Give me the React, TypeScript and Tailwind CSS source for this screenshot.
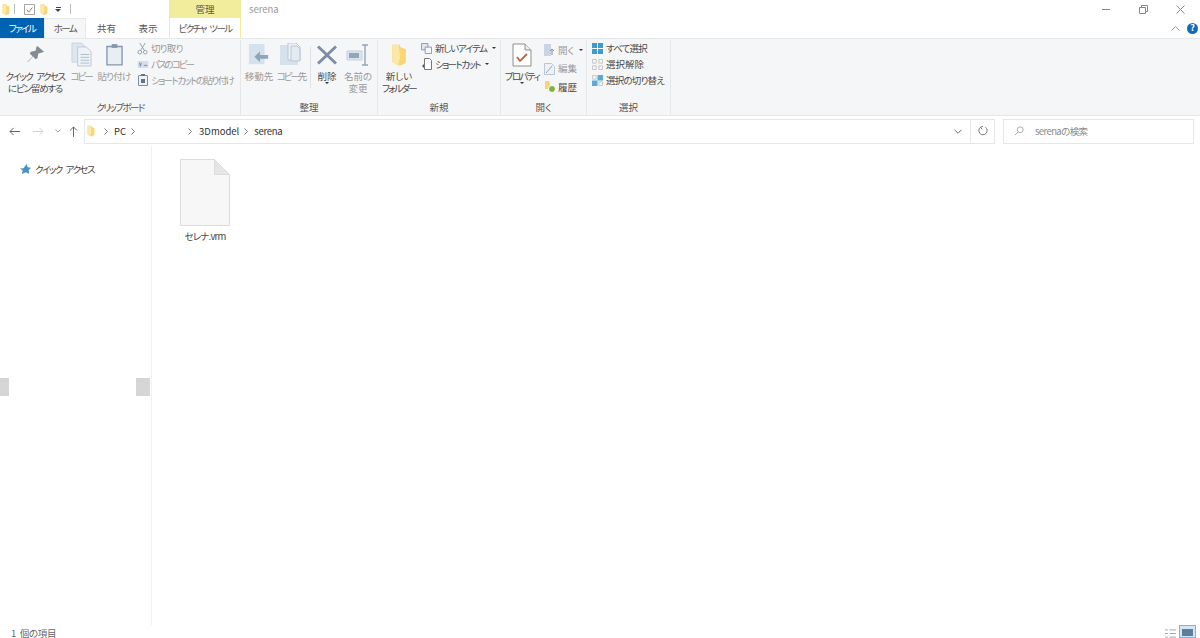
import type { ReactNode } from "react";

const font = "font-['Noto_Sans_CJK_JP','Noto_Sans',sans-serif] [font-feature-settings:'palt']";
// the original UI font has much narrower kana than Noto
const xl = "tracking-[-2px]";
const lg = "tracking-[-1.6px]";
const md = "tracking-[-1.2px]";
const sm = "tracking-[-0.8px]";

function Folder({ className }: { className: string }) {
	return (
		<svg viewBox="0 0 14 20" className={className}>
			<path d="M1 1h7v2l5 2v12l-4 2H6l-5-3z" fill="#f8d675" />
			<path d="M1 1h6v3l1 8-2 7-5-3z" fill="#fbe7a6" />
		</svg>
	);
}

function Chevron({ className }: { className: string }) {
	return (
		<svg viewBox="0 0 4 7" className={`h-[7px] w-[4px] shrink-0 ${className}`}>
			<path d="M.5.500l3 3-3 3" fill="none" stroke="#777" />
		</svg>
	);
}

function BigButton({ w, icon, lines, dim }: { w: number; icon: ReactNode; lines: ReactNode[]; dim?: boolean }) {
	return (
		<div
			className={`flex shrink-0 flex-col items-center ${dim ? "text-[#9a9a9a]" : "text-[#4a4a4a]"}`}
			style={{ width: w }}
		>
			<div className="flex h-[29px] items-center justify-center">{icon}</div>
			<div className="mt-[1px] text-center text-[9.5px] leading-[12px] whitespace-nowrap">
				{lines.map((l, i) => (
					<div key={i}>{l}</div>
				))}
			</div>
		</div>
	);
}

function Small({ icon, label, dim, caret, track }: { icon: ReactNode; label: string; dim?: boolean; caret?: boolean; track?: string }) {
	return (
		<div className={`flex h-[16px] items-center gap-[2px] text-[9.5px] whitespace-nowrap ${dim ? "text-[#9a9a9a]" : "text-[#4a4a4a]"}`}>
			<span className="flex w-[13px] justify-center">{icon}</span>
			<span className={track}>{label}</span>
			{caret && <span className="ml-[3px] h-0 w-0 border-x-[2px] border-t-[2px] border-x-transparent border-t-[#333]" />}
		</div>
	);
}

function Group({ w, label, track, children }: { w: number; label: string; track?: string; children: ReactNode }) {
	return (
		<div className="flex shrink-0 flex-col border-r border-[#e6e7e8]" style={{ width: w }}>
			<div className="flex h-[61px]">{children}</div>
			<div className={`text-center text-[9.5px] leading-[12px] text-[#555] ${track ?? ""}`}>{label}</div>
		</div>
	);
}

const Pin = (
	<svg viewBox="0 0 20 20" className="h-[19px] w-[19px]">
		<path d="M12 1l7 6-2 1-4 1-1 5-2 1-2.500-3L2 18l-.5-.5L7 12 4 9l1-2 5-1 1-4z" fill="#858b94" />
	</svg>
);
const CopyIcon = (
	<svg viewBox="0 0 22 26" className="h-[25px] w-[21px]">
		<path d="M1 1h10l3 3v17H1z" fill="#dfe6ef" stroke="#c9d3e0" />
		<path d="M7 5h9l5 5v15H7z" fill="#eef2f7" stroke="#b9c6d6" />
		<path d="M10 13h9M10 16h9M10 19h9M10 22h9" stroke="#aebccd" />
	</svg>
);
const PasteIcon = (
	<svg viewBox="0 0 18 24" className="h-[23px] w-[17px]">
		<path d="M1 3.500h16v19.500H1z" fill="#e9eef4" stroke="#8496ab" strokeWidth="1.400" />
		<path d="M6 1h6v4H6z" fill="#8496ab" />
	</svg>
);
const MoveIcon = (
	<svg viewBox="0 0 24 24" className="h-[24px] w-[22px]">
		<path d="M1 0h17v22H1z" fill="#d6e1ee" />
		<path d="M22 12h-9V8l-6 6 6 6v-4h9z" fill="#8fa5bd" />
	</svg>
);
const CopyToIcon = (
	<svg viewBox="0 0 24 24" className="h-[24px] w-[24px]">
		<path d="M1 2h18v20H1z" fill="#d6e1ee" />
		<path d="M9 0h8l4 4v13H9z" fill="#eef2f7" stroke="#b9c6d6" />
		<path d="M12 3h6l3 3v12h-9z" fill="#e4eaf1" stroke="#b9c6d6" />
	</svg>
);
const DeleteIcon = (
	<svg viewBox="0 0 20 20" className="h-[20px] w-[20px]">
		<path d="M2 .5l8 7.500 8-7.500L20 2.500 12 10l8 7.500-2 2-8-7.500-8 7.500-2-2L8 10 0 2.500z" fill="#7b8ea6" />
	</svg>
);
const RenameIcon = (
	<svg viewBox="0 0 24 22" className="h-[22px] w-[24px]">
		<path d="M1 7h15v9H1z" fill="#dbe4ee" stroke="#c6d1de" />
		<path d="M3 9h10v5H3z" fill="#93a5ba" />
		<path d="M16 1h6M16 21h6M19 1v20" stroke="#93a5ba" strokeWidth="1.400" fill="none" />
	</svg>
);
const PropsIcon = (
	<svg viewBox="0 0 20 24" className="h-[24px] w-[20px]">
		<path d="M1 1h12l6 6v16H1z" fill="#fff" stroke="#8f8f8f" />
		<path d="M13 1v6h6" fill="#eee" stroke="#8f8f8f" />
		<path d="M5 14l3 4 7-7" fill="none" stroke="#c0623a" strokeWidth="1.800" />
	</svg>
);

export default function App() {
	return (
		<div className={`flex h-[638px] w-[1200px] flex-col overflow-hidden bg-white ${font}`}>
			{/* title bar */}
			<div className="flex h-[18px] shrink-0">
				<div className="flex w-[169px] items-center pl-[2px]">
					<Folder className="h-[13px] w-[8px]" />
					<span className="mx-[4px] h-[10px] w-px bg-[#bbb]" />
					<svg viewBox="0 0 12 12" className="mx-[5px] h-[11px] w-[11px]">
						<path d="M.5.500h11v11H.500z" fill="#fff" stroke="#999" />
						<path d="M3 6l2 3 4-5" fill="none" stroke="#c0623a" />
					</svg>
					<Folder className="h-[13px] w-[8px]" />
					<span className="mx-[7px] flex flex-col items-center gap-[1px]">
						<span className="h-px w-[5px] bg-[#444]" />
						<span className="h-0 w-0 border-x-[3px] border-t-[3px] border-x-transparent border-t-[#444]" />
					</span>
					<span className="ml-[2px] h-[10px] w-px bg-[#bbb]" />
				</div>
				<div className="flex w-[72px] items-center justify-center bg-[#f1ed9c] text-[9.5px] text-[#555]">管理</div>
				<div className="flex flex-1 items-center pl-[8px] text-[9.5px] text-[#999]">serena</div>
				<div className="flex items-center text-[#777]">
					<span className="mr-[29px] h-px w-[8px] bg-[#888]" />
					<svg viewBox="0 0 9 9" className="mr-[28px] h-[9px] w-[9px]">
						<path d="M.5 2.500h6v6h-6zM2.500 2.500v-2h6v6h-2" fill="none" stroke="#888" />
					</svg>
					<svg viewBox="0 0 9 9" className="mr-[15px] h-[9px] w-[9px]">
						<path d="M.5.500l8 8M8.500.500l-8 8" stroke="#888" fill="none" />
					</svg>
				</div>
			</div>

			{/* tabs */}
			<div className="flex h-[20px] shrink-0 items-stretch text-[9.5px] text-[#555]">
				<div className={`flex w-[44px] items-center justify-center bg-[#0063b1] text-white ${lg}`}>ファイル</div>
				<div className={`flex w-[42px] items-center justify-center border-x border-t border-[#e6e7e8] bg-[#f5f6f7] ${lg}`}>ホーム</div>
				<div className="flex w-[41px] items-center justify-center">共有</div>
				<div className="flex w-[42px] items-center justify-center">表示</div>
				<div className={`flex w-[72px] items-center justify-center border-x border-[#f1ed9c] [word-spacing:3px] ${lg}`}>ピクチャ ツール</div>
				<div className="flex flex-1 items-center justify-end">
					<svg viewBox="0 0 9 5" className="mr-[7px] h-[5px] w-[9px]">
						<path d="M.5 4.500l4-4 4 4" fill="none" stroke="#999" />
					</svg>
					<span className="mr-[2px] flex h-[11px] w-[11px] items-center justify-center rounded-full bg-[#0f6cbd] text-[9px] font-bold text-white">?</span>
				</div>
			</div>

			{/* ribbon */}
			<div className="flex h-[78px] shrink-0 border-y border-[#e6e7e8] bg-[#f5f6f7] pt-[1px]">
				<Group w={241} label="クリップボード" track={lg}>
					<BigButton
						w={70}
						icon={Pin}
						lines={[
							<span className={`[word-spacing:3px] tracking-[-1.5px]`}>クイック アクセス</span>,
							<span className={md}>にピン留めする</span>,
						]}
					/>
					<BigButton w={22} dim icon={CopyIcon} lines={[<span className={xl}>コピー</span>]} />
					<BigButton w={44} dim icon={PasteIcon} lines={[<span className={sm}>貼り付け</span>]} />
					<div className="flex flex-col text-[9.5px]">
						<Small
							dim
							label="切り取り"
							track={sm}
							icon={
								<svg viewBox="0 0 12 14" className="h-[13px] w-[11px]">
									<path d="M3 1l5 8M9 1L4 9" stroke="#8e9aa8" fill="none" />
									<circle cx="3" cy="11" r="2" fill="none" stroke="#8e9aa8" />
									<circle cx="9" cy="11" r="2" fill="none" stroke="#8e9aa8" />
								</svg>
							}
						/>
						<Small
							dim
							label="パスのコピー"
							track={xl}
							icon={
								<svg viewBox="0 0 12 8" className="h-[7px] w-[12px]">
									<path d="M0 0h12v8H0z" fill="#d5deea" />
									<path d="M2 2l1 4 1-4M7 5h4" stroke="#71849a" fill="none" />
								</svg>
							}
						/>
						<Small
							dim
							label="ショートカットの貼り付け"
							track={lg}
							icon={
								<svg viewBox="0 0 10 12" className="h-[12px] w-[10px]">
									<path d="M.5 1.500h9v10h-9z" fill="#eef2f7" stroke="#7e90a5" />
									<path d="M3 0h4v2H3zM3 5h4v4H3z" fill="#5f7389" />
								</svg>
							}
						/>
					</div>
				</Group>
				<Group w={137} label="整理">
					<BigButton w={36} dim icon={MoveIcon} lines={["移動先"]} />
					<BigButton w={28} dim icon={CopyToIcon} lines={[<span className={xl}>コピー先</span>]} />
					<div className="mt-[6px] mr-[1px] ml-[5px] h-[42px] w-px bg-[#e2e3e4]" />
					<div className="flex flex-col items-center">
						<BigButton w={30} icon={DeleteIcon} lines={["削除"]} />
						<span className="h-0 w-0 border-x-[2px] border-t-[2px] border-x-transparent border-t-[#333]" />
					</div>
					<BigButton w={32} dim icon={RenameIcon} lines={["名前の", "変更"]} />
				</Group>
				<Group w={123} label="新規">
					<BigButton
						w={42}
						icon={<Folder className="h-[24px] w-[16px]" />}
						lines={["新しい", <span className={lg}>フォルダー</span>]}
					/>
					<div className="flex flex-col">
						<Small
							label="新しいアイテム"
							track={md}
							caret
							icon={
								<svg viewBox="0 0 12 12" className="h-[11px] w-[11px]">
									<path d="M.5.500h7v7h-7z" fill="#dfe6ef" stroke="#8496ab" />
									<path d="M4.500 4.500h7v7h-7z" fill="#f5f7fa" stroke="#8496ab" />
								</svg>
							}
						/>
						<Small
							label="ショートカット"
							track={lg}
							caret
							icon={
								<svg viewBox="0 0 10 12" className="h-[12px] w-[10px]">
									<path d="M2.500.500h5l2 2v9h-7z" fill="#fff" stroke="#777" />
									<path d="M0 8l2-2v4z" fill="#555" />
								</svg>
							}
						/>
					</div>
				</Group>
				<Group w={86} label="開く">
					<div className="flex flex-col items-center">
						<BigButton w={42} icon={PropsIcon} lines={[<span className={lg}>プロパティ</span>]} />
						<span className="h-0 w-0 border-x-[2px] border-t-[2px] border-x-transparent border-t-[#333]" />
					</div>
					<div className="mt-[2px] flex flex-col gap-[2.500px]">
						<Small
							dim
							label="開く"
							caret
							icon={
								<svg viewBox="0 0 11 12" className="h-[12px] w-[11px]">
									<path d="M0 0h7v12H0z" fill="#c9d5e3" />
									<path d="M8 11V5M6 7l2-2 2 2" stroke="#7e90a5" fill="none" />
								</svg>
							}
						/>
						<Small
							dim
							label="編集"
							icon={
								<svg viewBox="0 0 11 12" className="h-[12px] w-[11px]">
									<path d="M.5.500h7l3 3v8h-10z" fill="#eef2f7" stroke="#b9c6d6" />
									<path d="M2 10l6-7" stroke="#8fa5bd" />
								</svg>
							}
						/>
						<Small
							label="履歴"
							icon={
								<svg viewBox="0 0 12 12" className="h-[12px] w-[12px]">
									<path d="M1 0h4l1 2v6H1z" fill="#f8d675" />
									<circle cx="8" cy="8" r="3.500" fill="#7cb342" stroke="#fff" />
								</svg>
							}
						/>
					</div>
				</Group>
				<Group w={84} label="選択">
					<div className="ml-[4px] flex flex-col">
						<Small
							label="すべて選択"
							track={sm}
							icon={
								<svg viewBox="0 0 12 12" className="h-[11px] w-[11px]">
									<path d="M0 0h12v12H0z" fill="#3d9bd0" />
									<path d="M6 0v12M0 6h12" stroke="#fff" />
								</svg>
							}
						/>
						<Small
							label="選択解除"
							icon={
								<svg viewBox="0 0 12 12" className="h-[11px] w-[11px]">
									<path d="M.5.500h4v4h-4zM7.500.500h4v4h-4zM.5 7.500h4v4h-4zM7.500 7.500h4v4h-4z" fill="none" stroke="#c4c4c4" />
								</svg>
							}
						/>
						<Small
							label="選択の切り替え"
							track={sm}
							icon={
								<svg viewBox="0 0 12 12" className="h-[11px] w-[11px]">
									<path d="M6 0h6v6H6zM0 6h6v6H0z" fill="#5aaad8" />
									<path d="M.5.500h4v4h-4zM7.500 7.500h4v4h-4z" fill="none" stroke="#c4c4c4" />
								</svg>
							}
						/>
					</div>
				</Group>
			</div>

			{/* address row */}
			<div className="flex h-[30px] shrink-0 items-center">
				<div className="flex w-[84px] items-center text-[#555]">
					<svg viewBox="0 0 12 10" className="ml-[9px] h-[9px] w-[11px]">
						<path d="M12 5H1M5 1L1 5l4 4" fill="none" stroke="#555" />
					</svg>
					<svg viewBox="0 0 12 10" className="ml-[13px] h-[9px] w-[11px]">
						<path d="M0 5h11M7 1l4 4-4 4" fill="none" stroke="#ccc" />
					</svg>
					<svg viewBox="0 0 8 5" className="ml-[11px] h-[4px] w-[6px]">
						<path d="M.5.500L4 4 7.500.500" fill="none" stroke="#777" />
					</svg>
					<svg viewBox="0 0 10 12" className="ml-[8px] h-[11px] w-[9px]">
						<path d="M5 12V1M1 5l4-4 4 4" fill="none" stroke="#555" />
					</svg>
				</div>
				<div className="flex h-[25px] w-[911px] items-center border border-[#e6e7e8] text-[9.5px] text-[#333]">
					<Folder className="ml-[2px] h-[12px] w-[8px]" />
					<Chevron className="ml-[9px]" />
					<span className="ml-[6px]">PC</span>
					<Chevron className="ml-[5px]" />
					<Chevron className="ml-[53px]" />
					<span className="ml-[7px]">3Dmodel</span>
					<Chevron className="ml-[5px]" />
					<span className="ml-[6px] tracking-[-0.3px]">serena</span>
					<svg viewBox="0 0 9 5" className="mr-[8px] ml-auto h-[5px] w-[8px]">
						<path d="M.5.500L4.500 4.500 8.500.500" fill="none" stroke="#555" />
					</svg>
					<span className="h-full w-px bg-[#e6e7e8]" />
					<span className="flex w-[23px] justify-center">
						<svg viewBox="0 0 12 12" className="h-[10px] w-[10px]">
							<path d="M3 1.500a5 5 0 1 0 6 0M6 0L3 1.500 5 4" fill="none" stroke="#777" strokeWidth="1.200" />
						</svg>
					</span>
				</div>
				<div className="ml-[8px] flex h-[25px] w-[191px] items-center border border-[#e6e7e8] pl-[10px] text-[9.5px] text-[#8a8a8a]">
					<svg viewBox="0 0 12 12" className="h-[10px] w-[10px]">
						<circle cx="7.500" cy="4.500" r="3.500" fill="none" stroke="#999" />
						<path d="M5 7l-4 4" stroke="#999" />
					</svg>
					<span className="ml-[11px] tracking-[-0.6px]">serenaの検索</span>
				</div>
			</div>

			{/* body */}
			<div className="flex min-h-0 flex-1">
				<div className="w-[152px] shrink-0 border-r border-[#f1f1f1]">
					<div className="mt-[16px] ml-[20px] flex items-center gap-[4px] text-[9.5px] leading-[14px] text-[#444]">
						<svg viewBox="0 0 12 12" className="h-[11px] w-[11px]">
							<path d="M7 0l1.500 3.500L12 4 9.500 6.500 10 11 6.500 9 2 11l1-4L0 5l4-.5z" fill="#4a90c2" />
						</svg>
						<span className="[word-spacing:3px] tracking-[-1.5px]">クイック アクセス</span>
					</div>
					<div className="mt-[202px] flex h-[18px] justify-between pr-[1px]">
						<span className="w-[9px] bg-[#d6d6d6]" />
						<span className="w-[14px] bg-[#d6d6d6]" />
					</div>
				</div>
				<div className="flex-1 pt-[13px] pl-[18px]">
					<div className="flex w-[70px] flex-col items-center">
						<svg viewBox="0 0 50 67" className="h-[67px] w-[50px]">
							<path d="M.5.500h34l15 15v51H.500z" fill="#f7f7f8" stroke="#dcdcdc" />
							<path d="M34.500.500v15h15z" fill="#e6e6e6" stroke="#dcdcdc" />
						</svg>
						<span className={`mt-[3px] text-[9.5px] leading-[14px] text-[#444] ${sm}`}>セレナ.vrm</span>
					</div>
				</div>
			</div>

			{/* status bar */}
			<div className="flex h-[13px] shrink-0 items-start overflow-hidden">
				<span className="mt-[1px] ml-[11px] text-[9.5px] leading-[14px] tracking-[-0.3px] [word-spacing:2px] text-[#666]">1 個の項目</span>
				<svg viewBox="0 0 12 10" className="mt-[4px] mr-[3px] ml-auto h-[9px] w-[11px]">
					<path d="M0 1h3M0 5h3M0 9h3M5 1h7M5 5h7M5 9h7" stroke="#9a9a9a" />
				</svg>
				<span className="mr-[4px] h-[13px] w-[17px] border border-[#7fb4dc] bg-[#d3e6f5] px-[2px] pt-[3px]">
					<span className="block h-[7px] w-full bg-[#5d7f9c]" />
				</span>
			</div>
		</div>
	);
}
